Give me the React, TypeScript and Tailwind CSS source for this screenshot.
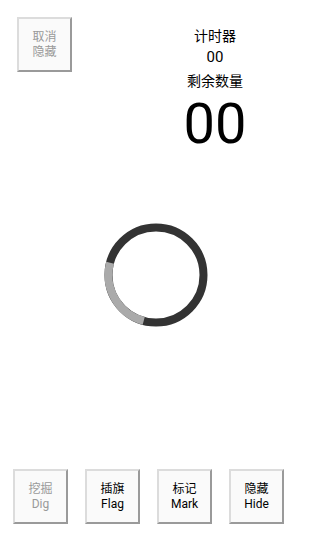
import React from "react";

const font = { fontFamily: 'Roboto, "Noto Sans CJK SC", sans-serif' };

function Btn({ top, bottom, dim }: { top: string; bottom?: string; dim?: boolean }) {
  return (
    <div
      className={`flex h-[55px] w-[55px] flex-col items-center justify-center border-t-2 border-l-2 border-r-2 border-b-2 border-t-[#dcdcdc] border-l-[#dcdcdc] border-r-[#9a9a9a] border-b-[#9a9a9a] bg-[#fafafa] text-[12px] leading-[15px] ${
        dim ? "text-[#999999]" : "text-black"
      }`}
    >
      <span>{top}</span>
      {bottom && <span>{bottom}</span>}
    </div>
  );
}

export default function App() {
  return (
    <div className="flex h-[550px] w-[309px] flex-col bg-white" style={font}>
      <div className="flex pl-[17px] pt-[17px]">
        <Btn top="取消" bottom="隐藏" dim />
        <div className="ml-[78px] flex w-[130px] flex-col items-center pt-[9px] text-[14px] leading-[20px] text-black">
          <span>计时器</span>
          <span className="mt-[1px] text-[15px]">00</span>
          <span className="mt-[4px]">剩余数量</span>
          <span className="mt-[4px] text-[56px] leading-[58px]">00</span>
        </div>
      </div>
      <div className="mt-[70px] flex justify-center">
        <svg width="104" height="104" viewBox="0 0 104 104" className="ml-[2px]">
          <circle cx="52" cy="52" r="47.5" fill="none" stroke="#333333" strokeWidth="8" />
          <path d="M39.71 97.88 A47.5 47.5 0 0 1 6.12 39.71" fill="none" stroke="#aaaaaa" strokeWidth="8" />
        </svg>
      </div>
      <div className="mt-[142px] flex gap-[17px] pl-[13px]">
        <Btn top="挖掘" bottom="Dig" dim />
        <Btn top="插旗" bottom="Flag" />
        <Btn top="标记" bottom="Mark" />
        <Btn top="隐藏" bottom="Hide" />
      </div>
    </div>
  );
}
